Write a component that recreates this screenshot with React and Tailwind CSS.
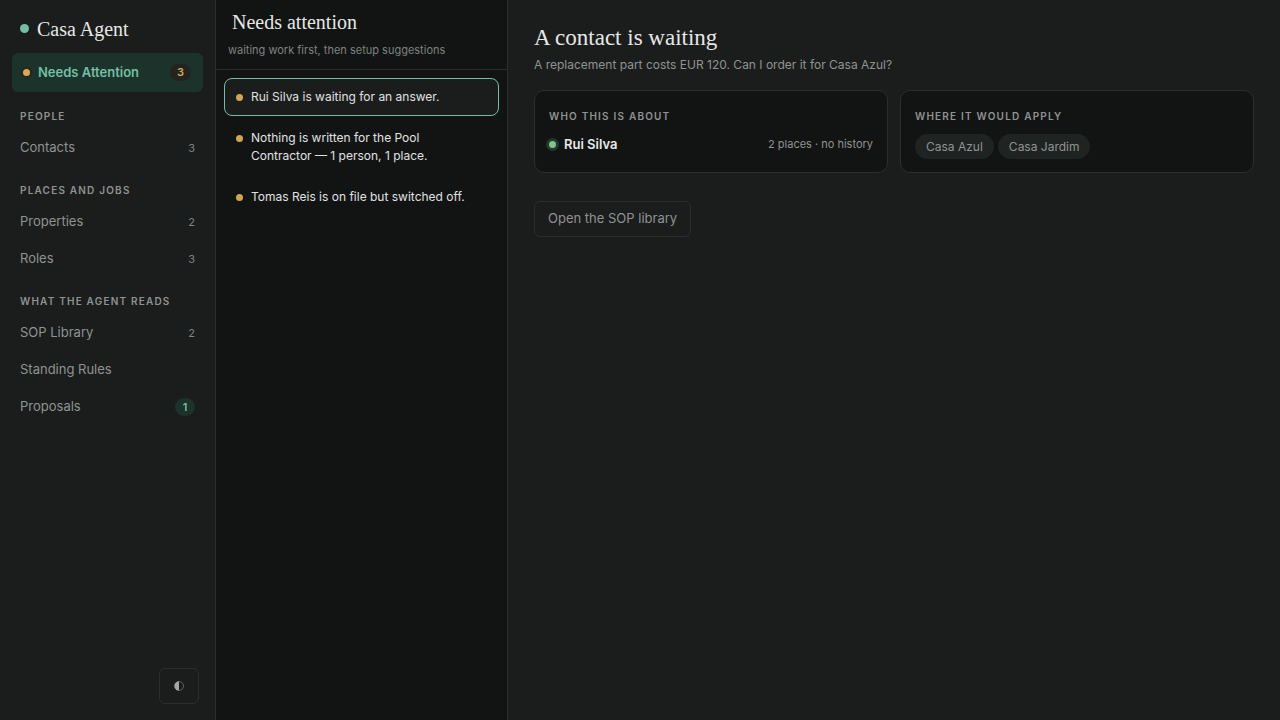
import React from 'react';
import { clsx } from 'clsx';

const navGroups = [
    { title: 'People', items: [{ label: 'Contacts', count: 3 }] },
    {
        title: 'Places and jobs',
        items: [
            { label: 'Properties', count: 2 },
            { label: 'Roles', count: 3 },
        ],
    },
    {
        title: 'What the agent reads',
        items: [
            { label: 'SOP Library', count: 2 },
            { label: 'Standing Rules' },
            { label: 'Proposals', count: 1, highlight: true },
        ],
    },
];

const attentionItems = [
    'Rui Silva is waiting for an answer.',
    'Nothing is written for the Pool Contractor — 1 person, 1 place.',
    'Tomas Reis is on file but switched off.',
];

const places = ['Casa Azul', 'Casa Jardim'];

const serif = "font-['Liberation_Serif',serif]";

const Label = ({ children, className }) => (
    <h2 className={clsx('text-[10px] leading-4 font-semibold uppercase tracking-[0.12em] text-[#8f9391]', className)}>
        {children}
    </h2>
);

const NavItem = ({ label, count, highlight }) => (
    <a href="#" className="flex h-9 items-center justify-between px-2 text-[13px] text-[#8f9391]">
        <span>{label}</span>
        {highlight ? (
            <span className="flex h-[18px] min-w-5 items-center justify-center rounded-full bg-[#1c332b] text-[11px] font-semibold text-[#74bfa3]">
                {count}
            </span>
        ) : (
            <span className="text-[11px] text-[#7d8280]">{count}</span>
        )}
    </a>
);

const Sidebar = () => (
    <aside className="flex w-[216px] shrink-0 flex-col border-r border-[#2b2e2d] px-3 pb-4">
        <div className="flex h-[53px] items-center gap-2 px-2 pt-1">
            <span className="h-[9px] w-[9px] rounded-full bg-[#74bfa3]" />
            <span className={clsx(serif, 'text-xl leading-6 text-[#e6e8e6]')}>Casa Agent</span>
        </div>

        <nav>
            <a href="#" aria-current="page" className="flex h-[39px] items-center rounded-md bg-[#1c332b] pr-3 pl-[11px] text-[#74bfa3]">
                <span className="h-[7px] w-[7px] rounded-full bg-[#d9a956] ring-2 ring-[#2a271f]" />
                <span className="ml-2 flex-1 text-[13px] font-semibold">Needs Attention</span>
                <span className="flex h-[17px] min-w-[21px] items-center justify-center rounded-full bg-[#232420] text-[11px] font-semibold text-[#d9a956]">
                    3
                </span>
            </a>
            <div className="flex flex-col gap-4 pt-4">
                {navGroups.map((group) => (
                    <section key={group.title}>
                        <Label className="mb-1.5 px-2">{group.title}</Label>
                        <div className="flex flex-col gap-px">
                            {group.items.map((item) => (
                                <NavItem key={item.label} {...item} />
                            ))}
                        </div>
                    </section>
                ))}
            </div>
        </nav>

        <button
            aria-label="Toggle theme"
            className="mt-auto mr-1 flex h-9 w-10 items-center justify-center self-end rounded-md border border-[#2b2e2d] text-[#a3a7a5]"
        >
            <svg width="10" height="10" viewBox="0 0 10 10">
                <circle cx="5" cy="5" r="4.5" fill="none" stroke="currentColor" strokeWidth="0.5" />
                <path d="M5 0.5a4.5 4.5 0 0 0 0 9z" fill="currentColor" />
            </svg>
        </button>
    </aside>
);

const AttentionList = () => (
    <section className="w-[292px] shrink-0 border-r border-[#2b2e2d] bg-[#121413]">
        <header className="h-[70px] border-b border-[#2b2e2d] px-3 pt-2.5">
            <h1 className={clsx(serif, 'px-1 text-xl leading-6 text-[#e6e8e6]')}>Needs attention</h1>
            <p className="mt-[7px] text-[11px] leading-[18px] text-[#7d8280]">waiting work first, then setup suggestions</p>
        </header>
        <ul className="flex flex-col gap-[3px] p-2">
            {attentionItems.map((text, i) => (
                <li key={text}>
                    <button
                        className={clsx(
                            'flex w-full gap-2 rounded-lg border py-[9px] pr-8 pl-[11px] text-left text-[#e0e2e1]',
                            i === 0 ? 'border-[#74bfa3] bg-[#1b1d1c]' : 'border-transparent'
                        )}
                    >
                        <span className="mt-[6px] h-[7px] w-[7px] shrink-0 rounded-full bg-[#d0a654]" />
                        <span className="text-xs leading-[18px]">{text}</span>
                    </button>
                </li>
            ))}
        </ul>
    </section>
);

const Card = ({ title, children }) => (
    <section className="h-[83px] rounded-[10px] border border-[#2b2e2d] bg-[#121413] px-3.5 pt-[17px]">
        <Label>{title}</Label>
        {children}
    </section>
);

const App = () => {
    return (
        <div className="flex min-h-screen bg-[#1b1d1c] font-['Inter',sans-serif]">
            <Sidebar />
            <AttentionList />
            <main className="min-w-0 flex-1 px-[26px] pt-6">
                <h1 className={clsx(serif, 'text-[23px] leading-7 text-[#e6e8e6]')}>A contact is waiting</h1>
                <p className="mt-1 text-xs leading-[18px] text-[#8f9391]">
                    A replacement part costs EUR 120. Can I order it for Casa Azul?
                </p>

                <div className="mt-4 grid grid-cols-2 gap-3">
                    <Card title="Who this is about">
                        <div className="mt-[11px] flex items-center">
                            <span className="h-[7px] w-[7px] rounded-full bg-[#82c390] ring-[3px] ring-[#1f3a27]" />
                            <span className="ml-2 text-[13px] leading-[18px] font-semibold text-[#e6e8e6]">Rui Silva</span>
                            <span className="ml-auto text-[11px] text-[#8f9391]">2 places · no history</span>
                        </div>
                    </Card>
                    <Card title="Where it would apply">
                        <div className="mt-2.5 flex gap-1">
                            {places.map((place) => (
                                <span
                                    key={place}
                                    className="flex h-[25px] items-center rounded-full bg-[#1f2322] px-[11px] text-xs text-[#8f9391]"
                                >
                                    {place}
                                </span>
                            ))}
                        </div>
                    </Card>
                </div>

                <button className="mt-7 h-9 rounded-md border border-[#2b2e2d] px-[13px] text-[13px] text-[#8f9391]">
                    Open the SOP library
                </button>
            </main>
        </div>
    );
};

export default App;
